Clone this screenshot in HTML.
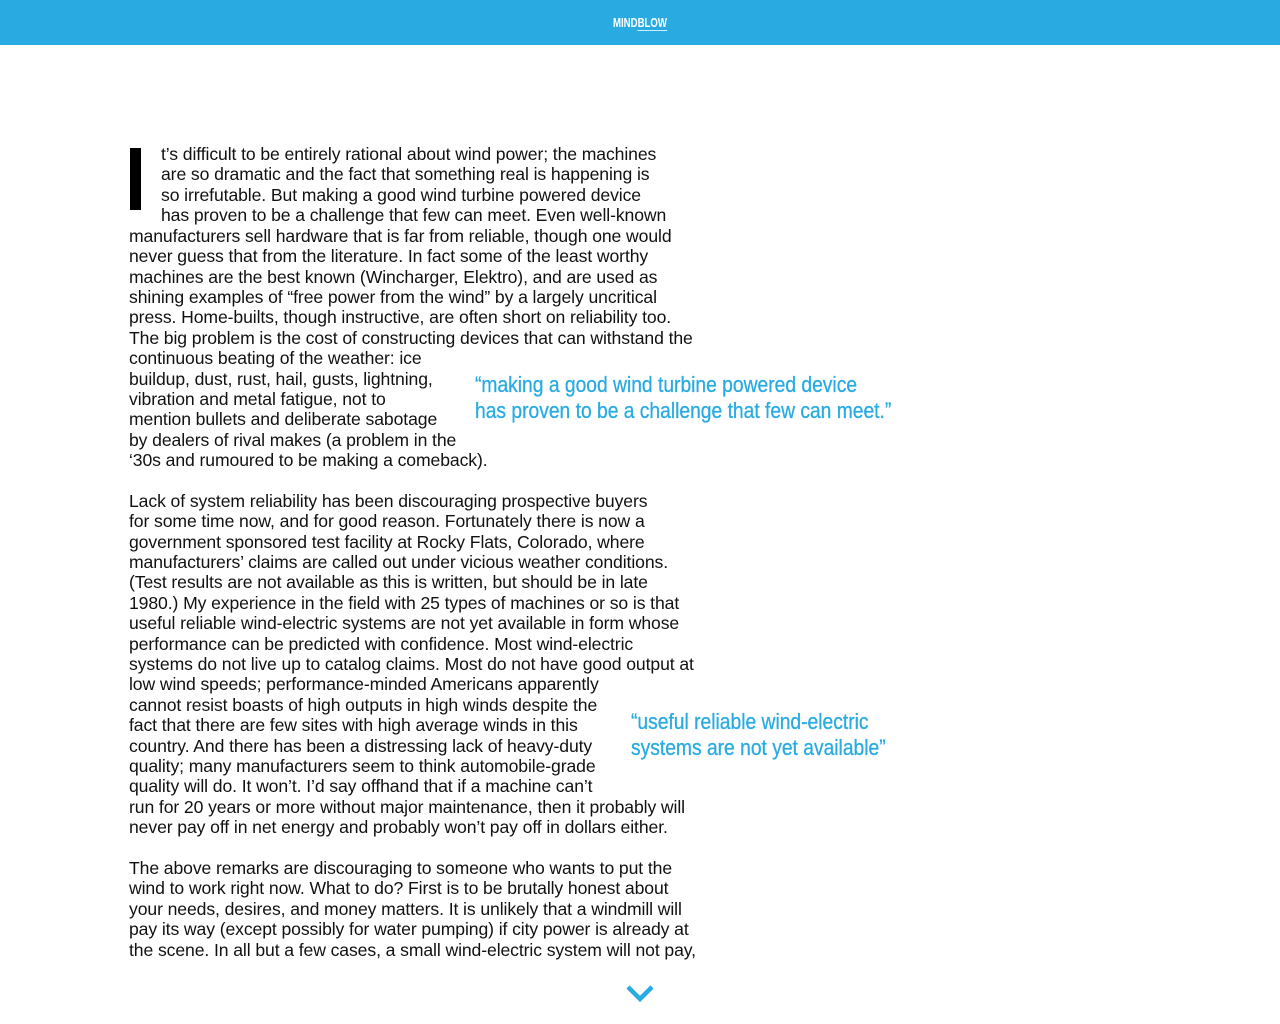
<!DOCTYPE html>
<html><head><meta charset="utf-8"><style>
body{margin:0;width:1280px;height:1024px;background:#fff;position:relative;overflow:hidden;font-family:"Liberation Sans",Arial,sans-serif;}
.bar{position:absolute;left:0;top:0;width:1280px;height:45px;background:#29abe2;}
.logo{position:absolute;left:613px;top:15px;color:#fff;font-weight:bold;font-size:13px;letter-spacing:0;transform:scaleX(0.74);transform-origin:left;}
.logo span{border-bottom:1px solid #cfeefc;}
.l{position:absolute;left:129px;font-size:17.6px;color:#111;white-space:nowrap;line-height:20px;letter-spacing:-0.1px;}
.q{position:absolute;color:#29abe2;font-size:22px;white-space:nowrap;line-height:26px;transform:scaleX(0.875);transform-origin:left;-webkit-text-stroke:0.3px #29abe2;}
.cap{position:absolute;left:130px;top:148px;width:11px;height:62px;background:#000;}
</style></head><body>
<div class="bar"></div>
<div class="logo">MIND<span>BLOW</span></div>
<div class="cap"></div>
<div class="l" style="top:144px;left:161px">t’s difficult to be entirely rational about wind power; the machines</div>
<div class="l" style="top:164px;left:161px">are so dramatic and the fact that something real is happening is</div>
<div class="l" style="top:185px;left:161px">so irrefutable. But making a good wind turbine powered device</div>
<div class="l" style="top:205px;left:161px">has proven to be a challenge that few can meet. Even well-known</div>
<div class="l" style="top:226px">manufacturers sell hardware that is far from reliable, though one would</div>
<div class="l" style="top:246px">never guess that from the literature. In fact some of the least worthy</div>
<div class="l" style="top:267px">machines are the best known (Wincharger, Elektro), and are used as</div>
<div class="l" style="top:287px">shining examples of “free power from the wind” by a largely uncritical</div>
<div class="l" style="top:307px">press. Home-builts, though instructive, are often short on reliability too.</div>
<div class="l" style="top:328px">The big problem is the cost of constructing devices that can withstand the</div>
<div class="l" style="top:348px">continuous beating of the weather: ice</div>
<div class="l" style="top:369px">buildup, dust, rust, hail, gusts, lightning,</div>
<div class="l" style="top:389px">vibration and metal fatigue, not to</div>
<div class="l" style="top:409px">mention bullets and deliberate sabotage</div>
<div class="l" style="top:430px">by dealers of rival makes (a problem in the</div>
<div class="l" style="top:450px">‘30s and rumoured to be making a comeback).</div>
<div class="q" style="left:475px;top:372px">“making a good wind turbine powered device<br>has proven to be a challenge that few can meet.”</div>
<div class="l" style="top:491px">Lack of system reliability has been discouraging prospective buyers</div>
<div class="l" style="top:511px">for some time now, and for good reason. Fortunately there is now a</div>
<div class="l" style="top:532px">government sponsored test facility at Rocky Flats, Colorado, where</div>
<div class="l" style="top:552px">manufacturers’ claims are called out under vicious weather conditions.</div>
<div class="l" style="top:572px">(Test results are not available as this is written, but should be in late</div>
<div class="l" style="top:593px">1980.) My experience in the field with 25 types of machines or so is that</div>
<div class="l" style="top:613px">useful reliable wind-electric systems are not yet available in form whose</div>
<div class="l" style="top:634px">performance can be predicted with confidence. Most wind-electric</div>
<div class="l" style="top:654px">systems do not live up to catalog claims. Most do not have good output at</div>
<div class="l" style="top:674px">low wind speeds; performance-minded Americans apparently</div>
<div class="l" style="top:695px">cannot resist boasts of high outputs in high winds despite the</div>
<div class="l" style="top:715px">fact that there are few sites with high average winds in this</div>
<div class="l" style="top:736px">country. And there has been a distressing lack of heavy-duty</div>
<div class="l" style="top:756px">quality; many manufacturers seem to think automobile-grade</div>
<div class="l" style="top:776px">quality will do. It won’t. I’d say offhand that if a machine can’t</div>
<div class="l" style="top:797px">run for 20 years or more without major maintenance, then it probably will</div>
<div class="l" style="top:817px">never pay off in net energy and probably won’t pay off in dollars either.</div>
<div class="q" style="left:631px;top:709px">“useful reliable wind-electric<br>systems are not yet available”</div>
<div class="l" style="top:858px">The above remarks are discouraging to someone who wants to put the</div>
<div class="l" style="top:878px">wind to work right now. What to do? First is to be brutally honest about</div>
<div class="l" style="top:899px">your needs, desires, and money matters. It is unlikely that a windmill will</div>
<div class="l" style="top:919px">pay its way (except possibly for water pumping) if city power is already at</div>
<div class="l" style="top:940px">the scene. In all but a few cases, a small wind-electric system will not pay,</div>
<svg style="position:absolute;left:625px;top:984px" width="30" height="20" viewBox="0 0 30 20"><path d="M3 3 L15 15 L27 3" fill="none" stroke="#29abe2" stroke-width="4.5"/></svg>
</body></html>
